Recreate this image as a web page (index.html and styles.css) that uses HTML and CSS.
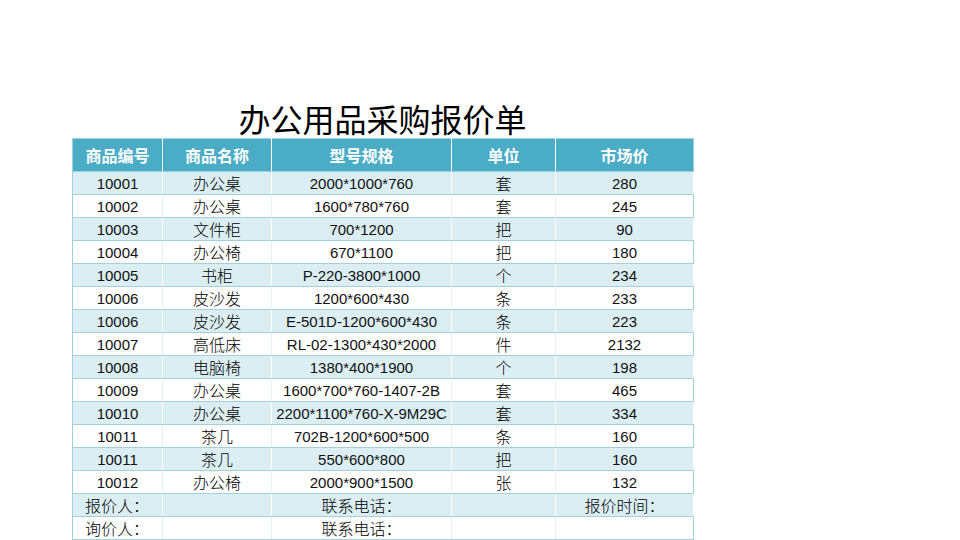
FILE: index.html
```html
<!DOCTYPE html>
<html lang="zh">
<head>
<meta charset="utf-8">
<link rel="stylesheet" href="styles.css">
</head>
<body>
<div class="sheet">
  <h1 class="title">办公用品采购报价单</h1>
  <table class="quote">
    <colgroup>
      <col class="c1"><col class="c2"><col class="c3"><col class="c4"><col class="c5">
    </colgroup>
    <thead>
      <tr><th>商品编号</th><th>商品名称</th><th>型号规格</th><th>单位</th><th>市场价</th></tr>
    </thead>
    <tbody>
      <tr><td class="n">10001</td><td>办公桌</td><td class="n">2000*1000*760</td><td>套</td><td class="n">280</td></tr>
      <tr><td class="n">10002</td><td>办公桌</td><td class="n">1600*780*760</td><td>套</td><td class="n">245</td></tr>
      <tr><td class="n">10003</td><td>文件柜</td><td class="n">700*1200</td><td>把</td><td class="n">90</td></tr>
      <tr><td class="n">10004</td><td>办公椅</td><td class="n">670*1100</td><td>把</td><td class="n">180</td></tr>
      <tr><td class="n">10005</td><td>书柜</td><td class="n">P-220-3800*1000</td><td>个</td><td class="n">234</td></tr>
      <tr><td class="n">10006</td><td>皮沙发</td><td class="n">1200*600*430</td><td>条</td><td class="n">233</td></tr>
      <tr><td class="n">10006</td><td>皮沙发</td><td class="n">E-501D-1200*600*430</td><td>条</td><td class="n">223</td></tr>
      <tr><td class="n">10007</td><td>高低床</td><td class="n">RL-02-1300*430*2000</td><td>件</td><td class="n">2132</td></tr>
      <tr><td class="n">10008</td><td>电脑椅</td><td class="n">1380*400*1900</td><td>个</td><td class="n">198</td></tr>
      <tr><td class="n">10009</td><td>办公桌</td><td class="n">1600*700*760-1407-2B</td><td>套</td><td class="n">465</td></tr>
      <tr><td class="n">10010</td><td>办公桌</td><td class="n">2200*1100*760-X-9M29C</td><td>套</td><td class="n">334</td></tr>
      <tr><td class="n">10011</td><td>茶几</td><td class="n">702B-1200*600*500</td><td>条</td><td class="n">160</td></tr>
      <tr><td class="n">10011</td><td>茶几</td><td class="n">550*600*800</td><td>把</td><td class="n">160</td></tr>
      <tr><td class="n">10012</td><td>办公椅</td><td class="n">2000*900*1500</td><td>张</td><td class="n">132</td></tr>
      <tr class="foot"><td class="lbl">报价人：</td><td></td><td>联系电话：</td><td></td><td>报价时间：</td></tr>
      <tr class="foot"><td class="lbl">询价人：</td><td></td><td>联系电话：</td><td></td><td></td></tr>
    </tbody>
  </table>
</div>
</body>
</html>
```
FILE: styles.css
```css
html, body {
  margin: 0;
  padding: 0;
  background: #ffffff;
}
.sheet {
  width: 621px;
  padding: 99px 0 0 72px;
  font-family: "Noto Sans CJK SC", sans-serif;
  color: #111;
}
.title {
  margin: 0;
  height: 39px;
  font-size: 32px;
  line-height: 39px;
  font-weight: 400;
  text-align: center;
  color: #000;
}
.quote {
  border-collapse: collapse;
  table-layout: fixed;
  width: 621px;
  border: 1px solid #9fd0de;
}
.c1 { width: 90px; }
.c2 { width: 109px; }
.c3 { width: 180px; }
.c4 { width: 104px; }
.c5 { width: 138px; }
.quote th {
  height: 32px;
  padding: 0;
  background: #4bacc6;
  color: #fff;
  font-size: 16px;
  font-weight: 700;
  border-right: 1px solid #ffffff;
  border-bottom: 1px solid #9fd0de;
  line-height: 32px;
}
.quote td {
  height: 21px;
  padding: 1px 0 0 0;
  font-size: 16px;
  font-weight: 300;
  line-height: 21px;
  text-align: center;
  border-bottom: 1px solid #a6cfdc;
  border-right: 1px solid #e4f1f5;
  white-space: nowrap;
  overflow: hidden;
  color: #000;
}
.quote tbody tr:nth-child(odd) td {
  background: #daeef3;
  border-right-color: #ffffff;
}
.quote tbody tr:nth-child(even) td {
  background: #ffffff;
}
.quote td:last-child, .quote th:last-child {
  border-right-color: #9fd0de;
}
.quote td.n {
  font-family: "Liberation Sans", Arial, sans-serif;
  font-size: 15px;
  font-weight: 400;
  color: #111;
}
.quote td.lbl {
  text-align: left;
  padding-left: 12px;
}
```
